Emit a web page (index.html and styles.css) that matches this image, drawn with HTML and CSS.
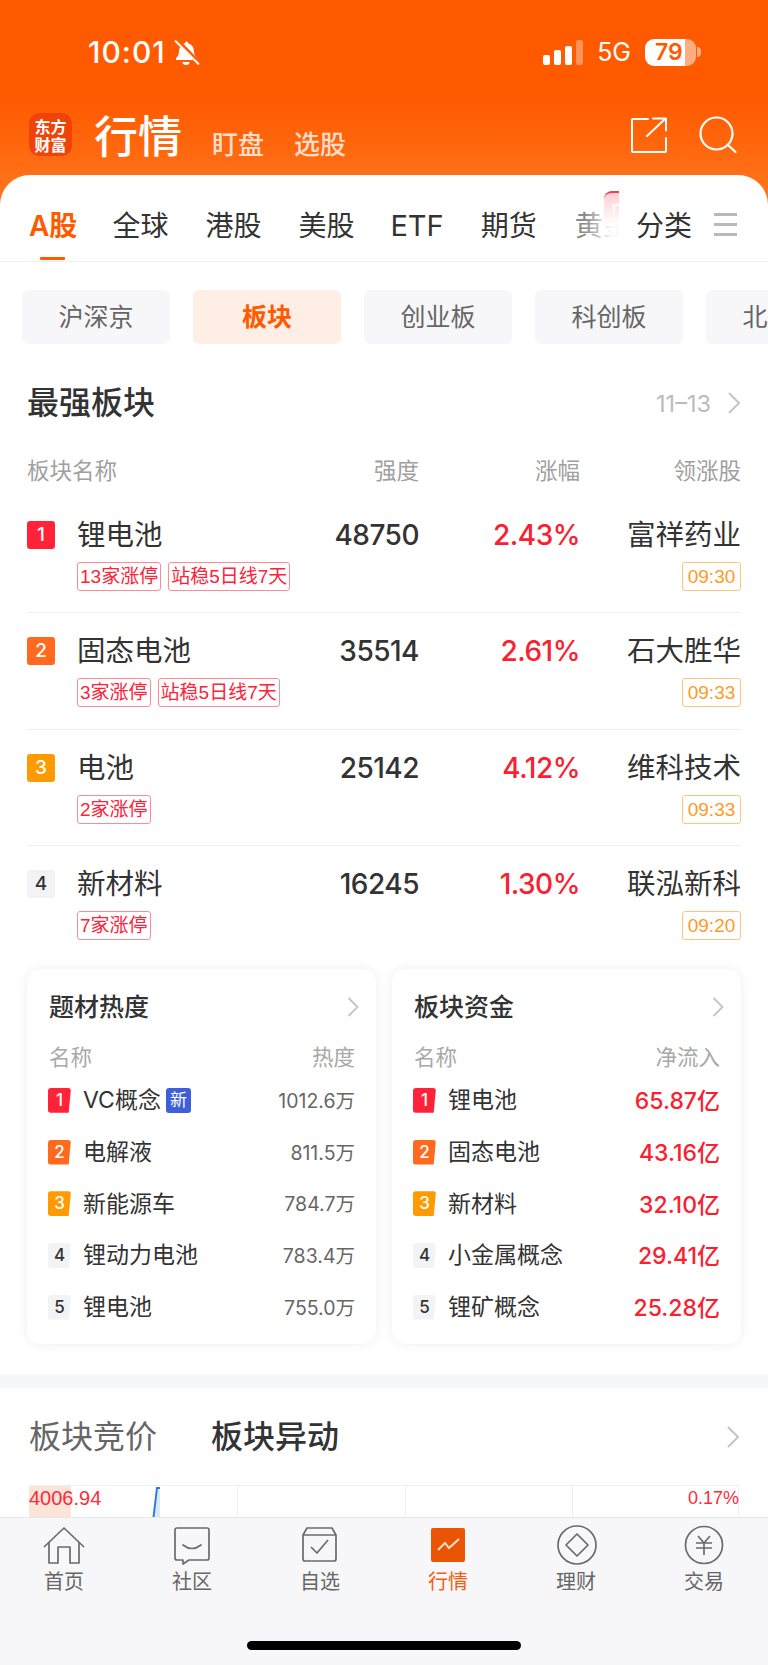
FILE: index.html
```html
<!DOCTYPE html>
<html lang="zh-CN">
<head>
<meta charset="utf-8">
<title>行情</title>
<link rel="stylesheet" href="styles.css">
</head>
<body>
<div class="app">
  <header class="top">
    <div class="status">
      <div class="status-left">
        <span class="clock">10:01</span>
        <svg class="bell" viewBox="0 0 27 25"><path d="M13 1.500c1.300 0 2.200.8 2.400 1.900 3.600 1 5.400 4 5.600 7.800.2 3.400 1 5.200 3 7v1.800H3v-1.800c2-1.800 2.800-3.600 3-7 .2-3.800 2-6.800 5.600-7.800.2-1.100 1.100-1.900 2.400-1.900z" fill="#fff"/><path d="M9.500 22h7a3.500 3 0 0 1-7 0z" fill="#fff"/><path d="M3 -1L27 24" stroke="#ff5a00" stroke-width="4"/><path d="M2 0.500L26 24.500" stroke="#fff" stroke-width="2"/></svg>
      </div>
      <div class="status-right">
        <div class="signal"><i class="s1"></i><i class="s2"></i><i class="s3"></i><i class="s4"></i></div>
        <span class="net">5G</span>
        <div class="battery"><span>79</span></div>
        <i class="nub"></i>
      </div>
    </div>
    <nav class="nav">
      <div class="logo"><span>东方</span><span>财富</span></div>
      <h1 class="nav-title">行情</h1>
      <span class="nav-link first">盯盘</span>
      <span class="nav-link">选股</span>
      <div class="nav-icons">
        <svg class="ico-share" viewBox="0 0 36 36" fill="none" stroke="#fff" stroke-width="2" stroke-linecap="round" stroke-linejoin="round"><path d="M17 2H2a1 1 0 0 0-1 1v31a1 1 0 0 0 1 1h32a1 1 0 0 0 1-1V21"/><path d="M16 19L34 2M22 1.500h13v12"/></svg>
        <svg class="ico-search" viewBox="0 0 38 38" fill="none" stroke="#fff" stroke-width="2.200" stroke-linecap="round"><circle cx="17.500" cy="17.500" r="16"/><path d="M29 29l7.500 7"/></svg>
      </div>
    </nav>
  </header>

  <main class="panel">
    <div class="tabs">
      <div class="tabs-scroll">
        <span class="tab active">A股</span>
        <span class="tab">全球</span>
        <span class="tab">港股</span>
        <span class="tab">美股</span>
        <span class="tab etf">ETF</span>
        <span class="tab">期货</span>
        <span class="tab gold">黄金<b class="tab-badge">n</b></span>
      </div>
      <span class="tab cat">分类</span>
      <div class="menu"><i></i><i></i><i></i></div>
    </div>

    <div class="chips">
      <span class="chip">沪深京</span>
      <span class="chip on">板块</span>
      <span class="chip">创业板</span>
      <span class="chip">科创板</span>
      <span class="chip">北交所</span>
    </div>

    <section class="strong">
      <div class="sec-head">
        <h2>最强板块</h2>
        <div class="sec-time">11–13
          <svg class="chev-lg" viewBox="0 0 14 22" fill="none" stroke="#c4c4c4" stroke-width="2"><path d="M2 1l10 10L2 21"/></svg>
        </div>
      </div>
      <div class="cols">
        <span>板块名称</span><span class="r">强度</span><span class="r">涨幅</span><span class="r">领涨股</span>
      </div>

      <div class="row">
        <div class="name"><span class="rank r1">1</span>锂电池</div>
        <div class="num">48750</div>
        <div class="pct">2.43%</div>
        <div class="lead">富祥药业</div>
        <div class="tags"><span class="tag">13家涨停</span><span class="tag">站稳5日线7天</span></div>
        <div class="when"><span class="time">09:30</span></div>
      </div>
      <div class="row">
        <div class="name"><span class="rank r2">2</span>固态电池</div>
        <div class="num">35514</div>
        <div class="pct">2.61%</div>
        <div class="lead">石大胜华</div>
        <div class="tags"><span class="tag">3家涨停</span><span class="tag">站稳5日线7天</span></div>
        <div class="when"><span class="time">09:33</span></div>
      </div>
      <div class="row">
        <div class="name"><span class="rank r3">3</span>电池</div>
        <div class="num">25142</div>
        <div class="pct">4.12%</div>
        <div class="lead">维科技术</div>
        <div class="tags"><span class="tag">2家涨停</span></div>
        <div class="when"><span class="time">09:33</span></div>
      </div>
      <div class="row last">
        <div class="name"><span class="rank r4">4</span>新材料</div>
        <div class="num">16245</div>
        <div class="pct">1.30%</div>
        <div class="lead">联泓新科</div>
        <div class="tags"><span class="tag">7家涨停</span></div>
        <div class="when"><span class="time">09:20</span></div>
      </div>
    </section>

    <div class="cards">
      <article class="card">
        <div class="card-head"><h3>题材热度</h3><svg class="chev-sm" viewBox="0 0 12 20" fill="none" stroke="#c4c4c4" stroke-width="1.800"><path d="M1.500 1l9 9-9 9"/></svg></div>
        <div class="card-cols"><span>名称</span><span>热度</span></div>
        <div class="item"><span class="mini r1">1</span><span class="item-name">VC概念<b class="new">新</b></span><span class="val">1012.6万</span></div>
        <div class="item"><span class="mini r2">2</span><span class="item-name">电解液</span><span class="val">811.5万</span></div>
        <div class="item"><span class="mini r3">3</span><span class="item-name">新能源车</span><span class="val">784.7万</span></div>
        <div class="item"><span class="mini r4">4</span><span class="item-name">锂动力电池</span><span class="val">783.4万</span></div>
        <div class="item"><span class="mini r4">5</span><span class="item-name">锂电池</span><span class="val">755.0万</span></div>
      </article>
      <article class="card">
        <div class="card-head"><h3>板块资金</h3><svg class="chev-sm" viewBox="0 0 12 20" fill="none" stroke="#c4c4c4" stroke-width="1.800"><path d="M1.500 1l9 9-9 9"/></svg></div>
        <div class="card-cols"><span>名称</span><span>净流入</span></div>
        <div class="item"><span class="mini r1">1</span><span class="item-name">锂电池</span><span class="val red">65.87亿</span></div>
        <div class="item"><span class="mini r2">2</span><span class="item-name">固态电池</span><span class="val red">43.16亿</span></div>
        <div class="item"><span class="mini r3">3</span><span class="item-name">新材料</span><span class="val red">32.10亿</span></div>
        <div class="item"><span class="mini r4">4</span><span class="item-name">小金属概念</span><span class="val red">29.41亿</span></div>
        <div class="item"><span class="mini r4">5</span><span class="item-name">锂矿概念</span><span class="val red">25.28亿</span></div>
      </article>
    </div>

    <div class="band"></div>

    <div class="sub-head">
      <span class="sub-tab">板块竞价</span>
      <span class="sub-tab on">板块异动</span>
      <svg class="chev-lg end" viewBox="0 0 14 22" fill="none" stroke="#c4c4c4" stroke-width="2"><path d="M2 1l10 10L2 21"/></svg>
    </div>

    <div class="chart">
      <svg class="chart-svg" viewBox="0 0 710 32" fill="none">
        <rect x="0" y="0" width="42" height="32" fill="#fce4d9"/>
        <path d="M124 32L128 3.500H131V32Z" fill="#dbe9fb"/>
        <path d="M0 .5H710M208.500 0V32M376.500 0V32M543.500 0V32M709.500 0V32" stroke="#eceef3"/>
        <path d="M124.500 32L128 3H131" stroke="#2a7de1" stroke-width="2"/>
      </svg>
      <span class="chart-l">4006.94</span>
      <span class="chart-r">0.17%</span>
    </div>
  </main>

  <footer class="tabbar">
    <div class="bar-items">
      <div class="bar-item">
        <svg viewBox="0 0 44 44" fill="none" stroke="#6b6b6b" stroke-width="1.700" stroke-linejoin="round"><path d="M2 22L22 3l20 19"/><path d="M7 17v21h9V22h12v16h9V17"/></svg>
        <span>首页</span>
      </div>
      <div class="bar-item">
        <svg viewBox="0 0 44 44" fill="none" stroke="#6b6b6b" stroke-width="1.700" stroke-linejoin="round"><path d="M7 3h30a2 2 0 0 1 2 2v28a2 2 0 0 1-2 2H19l-6 4v-4H7a2 2 0 0 1-2-2V5a2 2 0 0 1 2-2z"/><path d="M13 20q9 7 18 0" stroke-linecap="round"/></svg>
        <span>社区</span>
      </div>
      <div class="bar-item">
        <svg viewBox="0 0 44 44" fill="none" stroke="#6b6b6b" stroke-width="1.700" stroke-linejoin="round"><path d="M5 10L9 3h25l4 7v24a2 2 0 0 1-2 2H7a2 2 0 0 1-2-2z"/><path d="M5 10h33"/><path d="M13 22l6 6 11-13"/></svg>
        <span>自选</span>
      </div>
      <div class="bar-item on">
        <svg viewBox="0 0 44 44" fill="none"><rect x="5" y="3" width="34" height="34" rx="2" fill="#ea5504"/><path d="M12 25l7-7 4 5 10-9" stroke="#fde0cf" stroke-width="2"/></svg>
        <span>行情</span>
      </div>
      <div class="bar-item">
        <svg viewBox="0 0 44 44" fill="none" stroke="#6b6b6b" stroke-width="1.700"><circle cx="23" cy="20" r="19"/><path d="M23 9l11 11-11 11-11-11z" stroke-linejoin="round"/></svg>
        <span>理财</span>
      </div>
      <div class="bar-item">
        <svg viewBox="0 0 44 44" fill="none" stroke="#6b6b6b" stroke-width="1.700"><circle cx="22" cy="20" r="18.500"/><path d="M16 11l6 7 6-7M14 18h16M14 23h16M22 18v12"/></svg>
        <span>交易</span>
      </div>
    </div>
    <div class="home-bar"></div>
  </footer>
</div>
</body>
</html>
```

FILE: styles.css
```css
* { box-sizing: border-box; margin: 0; padding: 0; }
html, body { width: 768px; height: 1665px; overflow: hidden; background: #fff; }
body { font-family: Inter, "Noto Sans CJK SC", "Noto Sans", sans-serif; color: #333; }
i { display: block; font-style: normal; }

.app {
  width: 768px; height: 1665px; display: flex; flex-direction: column;
  background: linear-gradient(180deg, #ff5a00 0, #ff5a00 100px, #ff7a22 215px) no-repeat;
  background-size: 100% 215px;
}

/* top */
.top { height: 175px; flex: none; color: #fff; padding-top: 30px; }
.status { height: 44px; padding: 0 67px 0 88px; display: flex; justify-content: space-between; align-items: center; }
.status-left { display: flex; align-items: center; gap: 7px; }
.clock { font-size: 30px; font-weight: 500; line-height: 44px; letter-spacing: 1px; }
.bell { width: 27px; height: 25px; display: block; }
.status-right { display: flex; align-items: center; position: relative; }
.signal { display: flex; align-items: flex-end; gap: 4px; height: 25px; margin-right: 14px; }
.signal i { width: 7px; background: #fff; border-radius: 2px; }
.signal .s1 { height: 10px; }
.signal .s2 { height: 15px; }
.signal .s3 { height: 19px; }
.signal .s4 { height: 25px; background: rgba(255,255,255,.35); }
.net { font-size: 25px; line-height: 30px; margin-right: 14px; }
.battery {
  width: 51px; height: 27px; border-radius: 9px; color: #ff5a00;
  background: linear-gradient(90deg, #fff 0, #fff 40px, rgba(255,255,255,.5) 40px);
  font-size: 23px; font-weight: 600; line-height: 27px; padding-left: 10px;
}
.nub { width: 4px; height: 10px; margin-left: 1px; border-radius: 0 4px 4px 0; background: rgba(255,255,255,.5); }

.nav { height: 43px; margin-top: 39px; padding: 0 31px 0 29px; display: flex; align-items: flex-end; }
.logo {
  width: 43px; height: 43px; border-radius: 10px; background: #f0430a; display: flex; flex-direction: column;
  align-items: center; justify-content: center; font-size: 16px; line-height: 18px; font-weight: 700;
  font-family: "Noto Sans CJK SC", sans-serif;
}
.nav-title { font-size: 44px; line-height: 43px; font-weight: 500; margin-left: 22px; font-family: "Noto Sans CJK SC", sans-serif; }
.nav-link { font-size: 26px; line-height: 28px; font-weight: 500; color: rgba(255,255,255,.8); margin-left: 30px; font-family: "Noto Sans CJK SC", sans-serif; margin-bottom: -1px; }
.nav-icons { margin-left: auto; display: flex; align-items: center; gap: 32px; align-self: center; }
.ico-share { width: 36px; height: 36px; display: block; }
.ico-search { width: 38px; height: 38px; display: block; }

/* panel */
.panel { flex: 1; min-height: 0; overflow: hidden; background: #fff; border-radius: 30px 30px 0 0; }

.tabs { height: 87px; border-bottom: 1px solid #eeeeee; display: flex; position: relative; }
.tabs-scroll {
  width: 619px; flex: none; height: 86px; overflow: hidden; display: flex; gap: 37px; padding-left: 29px; white-space: nowrap;
}
.tab { font-size: 28px; line-height: 40px; margin-top: 31px; color: #333; flex: none; position: relative; }
.tab.active { color: #ff5a00; font-weight: 600; margin-right: -2px; }
.tab.active::after { content: ""; position: absolute; left: 11px; width: 25px; top: 51px; height: 3px; border-radius: 1px; background: #ff5a00; }
.tab.etf { margin-left: -1px; font-size: 29px; }
.tab.gold { color: #8a8a8a; margin-left: 1px; }
.tab.gold::after { content: ""; position: absolute; left: 0; top: 0; width: 60px; height: 40px; background: linear-gradient(90deg, rgba(255,255,255,0) 10px, rgba(255,255,255,.95) 36px); }
.tab-badge {
  position: absolute; z-index: 1; left: 29px; top: -15px; width: 30px; height: 34px; border-radius: 8px 8px 0 0; border-top: 2px solid #f04050;
  background: linear-gradient(180deg, #ffcfd2, #fff); color: #fff; font-size: 18px; font-weight: 400; line-height: 30px; padding-left: 8px;
}
.tab.cat { margin-left: 17px; }
.menu { width: 23px; margin: 38px 0 0 22px; height: 23px; display: flex; flex-direction: column; justify-content: space-between; flex: none; }
.menu i { height: 3px; background: #b9b9b9; }

.chips { display: flex; gap: 23px; padding-left: 22px; margin-top: 28px; overflow: hidden; }
.chip {
  flex: none; width: 148px; height: 54px; border-radius: 6px; background: #f7f7f9; color: #666; font-size: 25px; line-height: 54px; text-align: center;
}
.chip.on { background: #ffeee6; color: #ff5a00; font-weight: 600; }

.strong { padding: 0 27px; }
.sec-head { height: 60px; margin-top: 29px; display: flex; justify-content: space-between; align-items: center; }
.sec-head h2 { font-size: 32px; font-weight: 500; color: #333; line-height: 40px; }
.sec-time { display: flex; align-items: center; gap: 16px; font-size: 23.500px; color: #bbb; font-weight: 400; }
.chev-lg { width: 14px; height: 22px; display: block; flex: none; }
.cols { display: grid; grid-template-columns: 273px 119px 161px 161px; height: 28px; margin-top: 24px; font-size: 22.500px; line-height: 28px; color: #a0a0a0; }
.cols .r { text-align: right; }

.row {
  height: 116.500px; padding-top: 24px; border-bottom: 1px solid #f0f0f0;
  display: grid; grid-template-columns: 273px 119px 161px 161px; grid-template-rows: 28px 29px; row-gap: 13px; align-items: center;
}
.row.last { border-bottom: 0; }
.cols + .row { margin-top: 11.500px; }
.name { display: flex; align-items: center; gap: 22px; font-size: 28.500px; line-height: 28px; color: #333; }
.rank { width: 28px; height: 28px; border-radius: 3px; font-size: 19px; font-weight: 500; line-height: 28px; text-align: center; color: #fff; flex: none; }
.r1 { background: #ff2238; color: #fff; }
.r2 { background: #ff6a1f; color: #fff; }
.r3 { background: #ff9a00; color: #fff; }
.r4 { background: #f2f3f5; color: #333; }
.num { font-size: 28px; line-height: 28px; text-align: right; font-weight: 500; letter-spacing: -.5px; color: #333; }
.pct { font-size: 28px; line-height: 28px; text-align: right; font-weight: 500; letter-spacing: -.5px; color: #fa2030; }
.lead { font-size: 28.500px; line-height: 28px; text-align: right; color: #333; white-space: nowrap; }
.tags { grid-column: 1 / 4; display: flex; gap: 7px; padding-left: 50px; }
.tag { height: 29px; padding: 0 2px; border: 1px solid #ff8b97; border-radius: 3px; font-family: "Liberation Sans", "Noto Sans CJK SC", sans-serif; font-size: 19px; line-height: 27px; color: #ff2238; white-space: nowrap; }
.when { grid-column: 4; display: flex; justify-content: flex-end; }
.time { width: 59px; height: 29px; border: 1px solid #ffc57a; border-radius: 3px; font-family: "Liberation Sans", sans-serif; font-size: 19px; line-height: 27px; color: #ff9a1f; text-align: center; font-weight: 400; }

.cards { display: flex; gap: 16px; padding: 0 27px; margin-top: 6px; }
.card { width: 349px; height: 375px; flex: none; border-radius: 14px; background: #fff; box-shadow: 0 0 12px rgba(0,0,0,.07); padding: 24px 21px 0 22px; }
.card-head { height: 28px; display: flex; justify-content: space-between; align-items: center; }
.card-head h3 { font-size: 25px; font-weight: 500; line-height: 28px; color: #333; }
.chev-sm { width: 12px; height: 20px; margin-right: -4px; display: block; }
.card-cols { height: 28px; margin-top: 22px; margin-bottom: 4px; display: flex; justify-content: space-between; font-size: 21.500px; line-height: 28px; color: #a8a8a8; }
.item { height: 51.700px; display: flex; align-items: center; }
.mini {
  width: 23px; height: 25px; flex: none; border-radius: 3px; margin-left: -1px; font-size: 17px; font-weight: 500; line-height: 25px; text-align: center;
  clip-path: polygon(0 0, 100% 0, 90% 100%, 0 100%);
}
.item-name { margin-left: 12px; font-size: 23px; line-height: 28px; color: #333; display: flex; align-items: center; }
.new { width: 25px; height: 25px; margin-left: 5px; border-radius: 3px; background: #3f5fd9; color: #fff; font-size: 17px; font-weight: 400; line-height: 25px; text-align: center; }
.val { margin-left: auto; margin-top: -2px; font-size: 19.500px; color: #666; }
.val.red { font-size: 23px; font-weight: 500; color: #fa2030; }

.band { height: 14px; margin-top: 30px; background: #f6f7f9; }
.sub-head { height: 97px; padding: 2px 28px 0 29px; display: flex; align-items: center; gap: 54px; }
.sub-tab { font-size: 32px; line-height: 40px; color: #666; }
.sub-tab.on { color: #333; font-weight: 500; }
.chev-lg.end { margin-left: auto; }

.chart { position: relative; margin-left: 29px; width: 710px; height: 32px; }
.chart-svg { width: 710px; height: 32px; display: block; }
.chart-l, .chart-r { position: absolute; top: 0; line-height: 26px; color: #ff2a3a; font-family: "Liberation Sans", sans-serif; }
.chart-l { left: 0; font-size: 20px; }
.chart-r { right: 0; font-size: 18px; }

/* bottom */
.tabbar { height: 148px; flex: none; background: #f7f7f9; border-top: 1px solid #e8e8ea; padding-top: 7px; }
.bar-items { display: grid; grid-template-columns: repeat(6, 128px); }
.bar-item { display: flex; flex-direction: column; align-items: center; font-size: 20px; line-height: 24px; color: #666; }
.bar-item svg { width: 44px; height: 44px; display: block; margin-bottom: 1px; }
.bar-item.on { color: #f0600f; }
.home-bar { width: 274px; height: 9px; margin: 47px auto 0; border-radius: 5px; background: #000; }
```
